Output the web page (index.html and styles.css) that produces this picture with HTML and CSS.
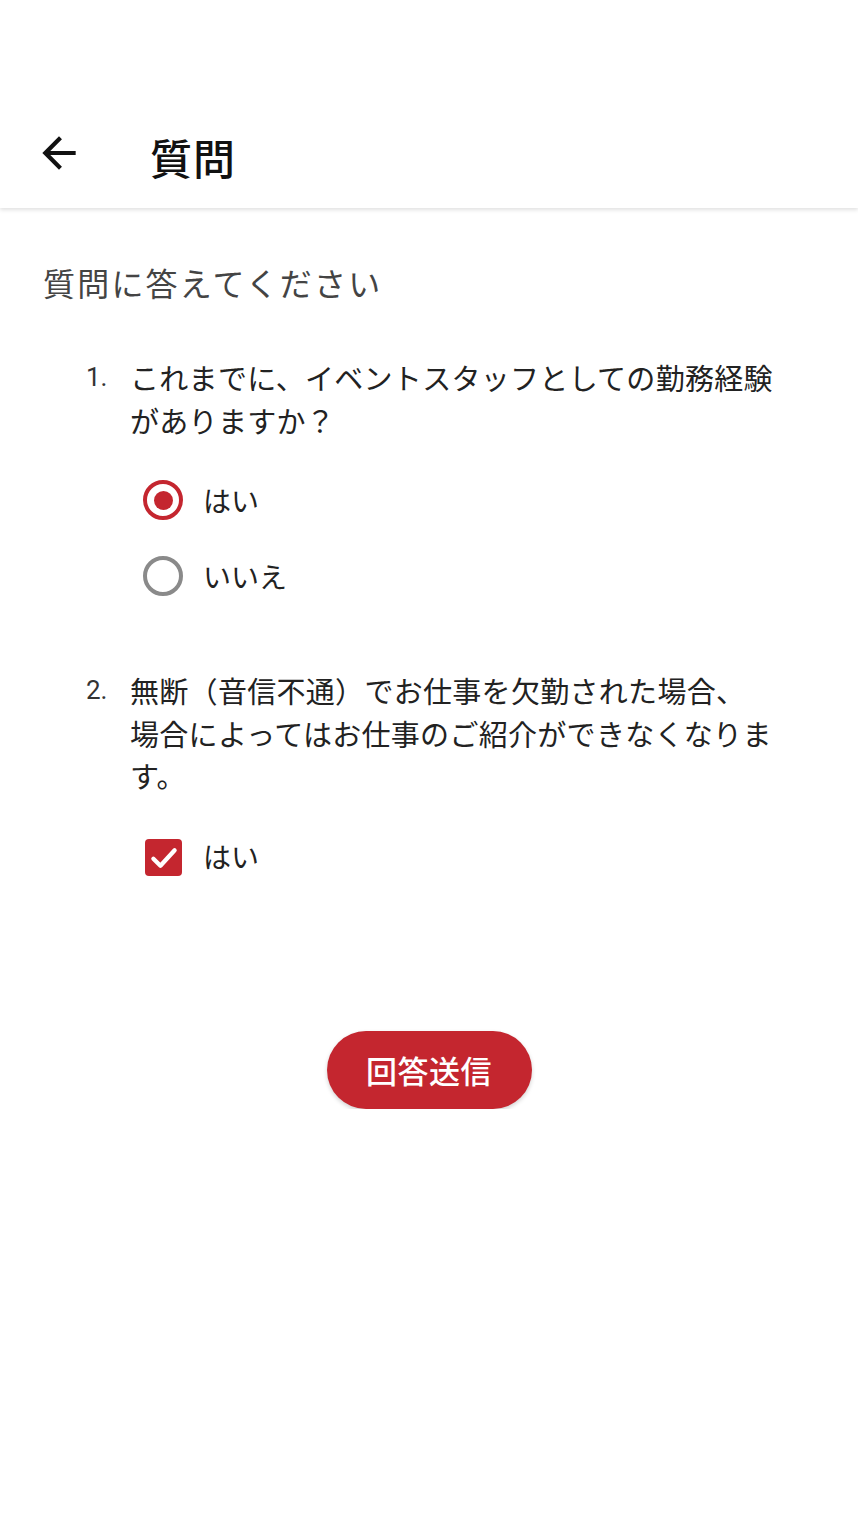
FILE: index.html
```html
<!DOCTYPE html>
<html lang="ja">
<head>
    <meta charset="UTF-8">
    <meta name="viewport" content="width=device-width, initial-scale=1.0">
    <title>質問</title>
    <link rel="stylesheet" href="styles.css">
</head>
<body>

    <header class="app-bar">
        <button class="back-button" aria-label="戻る">
            <svg viewBox="0 0 24 24" width="50" height="50">
                <path d="M20 11H7.83l5.59-5.59L12 4l-8 8 8 8 1.41-1.41L7.83 13H20v-2z" fill="#111"/>
            </svg>
        </button>
        <h1 class="app-title">質問</h1>
    </header>

    <main class="content">
        <h2 class="lead">質問に答えてください</h2>

        <ol class="questions">
            <li class="question">
                <span class="q-num">1.</span>
                <div class="q-body">
                    <p class="q-text">これまでに、イベントスタッフとしての勤務経験がありますか？</p>
                    <div class="choices">
                        <label class="choice">
                            <input type="radio" name="q1" checked>
                            <span class="radio"></span>
                            <span class="choice-text">はい</span>
                        </label>
                        <label class="choice">
                            <input type="radio" name="q1">
                            <span class="radio"></span>
                            <span class="choice-text">いいえ</span>
                        </label>
                    </div>
                </div>
            </li>
            <li class="question">
                <span class="q-num">2.</span>
                <div class="q-body">
                    <p class="q-text">無断（音信不通）でお仕事を欠勤された場合、<br>場合によってはお仕事のご紹介ができなくなります。</p>
                    <div class="choices">
                        <label class="choice">
                            <input type="checkbox" checked>
                            <span class="check">
                                <svg viewBox="0 0 24 24" width="34" height="34">
                                    <path d="M4.5 12.5l5 5L19.5 6.5" fill="none" stroke="#fff" stroke-width="3" stroke-linecap="round" stroke-linejoin="round"/>
                                </svg>
                            </span>
                            <span class="choice-text">はい</span>
                        </label>
                    </div>
                </div>
            </li>
        </ol>

        <div class="actions">
            <button class="submit-button">回答送信</button>
        </div>
    </main>

</body>
</html>
```

FILE: styles.css
```css
body {
    margin: 0;
    background-color: #fff;
    color: #222;
    font-family: "Noto Sans CJK JP", "Noto Sans", sans-serif;
}

/* ヘッダー */
.app-bar {
    display: flex;
    align-items: center;
    height: 104px;
    padding: 104px 0 0 34px;
    background-color: #fff;
    box-shadow: 0 2px 4px rgba(0,0,0,0.12);
}
.back-button {
    display: flex;
    padding: 0;
    margin-top: -6px;
    border: none;
    background: none;
    cursor: pointer;
}
.app-title {
    margin: 0 0 0 66px;
    font-size: 42px;
    font-weight: 500;
    letter-spacing: 1px;
    color: #111;
}

.content {
    padding: 0 43px;
}
.lead {
    margin: 53px 0 52px;
    font-size: 32px;
    font-weight: 400;
    letter-spacing: 2.2px;
    line-height: 43px;
    color: #444;
}

/* 質問リスト */
.questions {
    list-style: none;
    margin: 0;
    padding: 0 17px 0 43px;
}
.question {
    display: flex;
    margin-bottom: 65px;
}
.question:last-child {
    margin-bottom: 0;
}
.q-num {
    width: 45px;
    flex-shrink: 0;
    font-family: Roboto, "Noto Sans", sans-serif;
    font-size: 26px;
    line-height: 42px;
    color: #333;
}
.q-body {
    flex: 1;
}
.q-text {
    margin: 0 0 0 -1px;
    font-size: 29px;
    letter-spacing: 0.3px;
    line-height: 42.5px;
    color: #222;
}

.choices {
    display: flex;
    flex-direction: column;
    gap: 20px;
    margin-top: 31px;
    padding-left: 12px;
}
.choice {
    display: flex;
    align-items: center;
    height: 56px;
    cursor: pointer;
}
.choice input {
    display: none;
}
.choice-text {
    margin-left: 20px;
    font-size: 28px;
    color: #222;
}

/* ラジオボタン */
.radio {
    width: 40px;
    height: 40px;
    box-sizing: border-box;
    border: 4px solid #8a8a8a;
    border-radius: 50%;
    display: flex;
    align-items: center;
    justify-content: center;
}
.choice input:checked + .radio {
    border-color: #c4262f;
}
.choice input:checked + .radio::after {
    content: "";
    width: 19px;
    height: 19px;
    border-radius: 50%;
    background-color: #c4262f;
}

/* チェックボックス */
.check {
    width: 37px;
    height: 37px;
    margin: 4px 1px 0 2px;
    border-radius: 4px;
    background-color: #c4262f;
    display: flex;
    align-items: center;
    justify-content: center;
}

.actions {
    display: flex;
    justify-content: center;
    margin-top: 147px;
}
.submit-button {
    width: 205px;
    height: 78px;
    border: none;
    border-radius: 39px;
    background-color: #c4262f;
    color: #fff;
    font-family: "Noto Sans CJK JP", sans-serif;
    font-size: 31px;
    font-weight: 500;
    letter-spacing: 0.5px;
    box-shadow: 0 2px 4px rgba(0,0,0,0.18);
    cursor: pointer;
}
```
